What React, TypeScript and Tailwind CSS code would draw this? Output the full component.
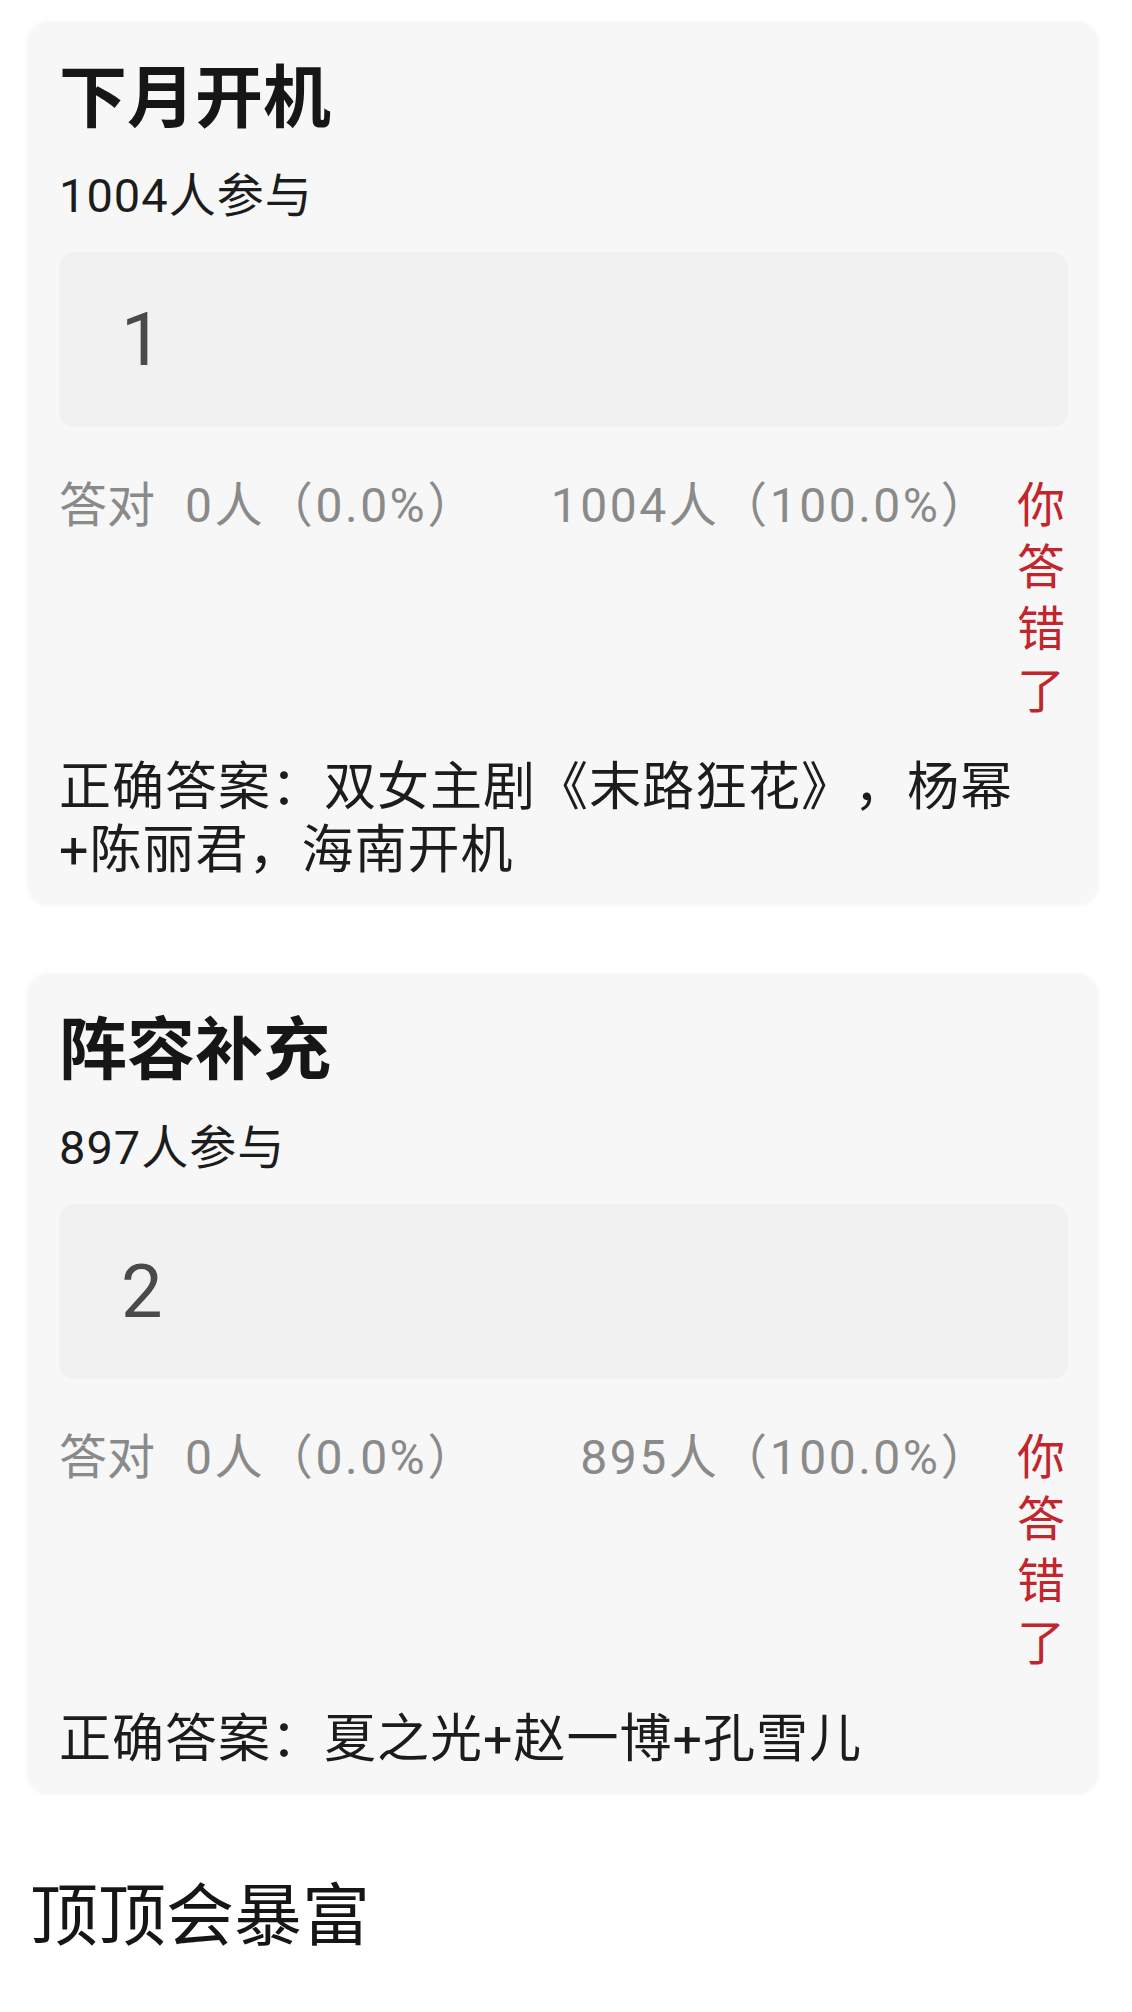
type Question = {
  title: string;
  joined: number;
  answer: string;
  rightText: string;
  wrongText: string;
  correct: string;
};

const questions: Question[] = [
  {
    title: "下月开机",
    joined: 1004,
    answer: "1",
    rightText: "0人（0.0%）",
    wrongText: "1004人（100.0%）",
    correct: "正确答案：双女主剧《末路狂花》，杨幂+陈丽君，海南开机",
  },
  {
    title: "阵容补充",
    joined: 897,
    answer: "2",
    rightText: "0人（0.0%）",
    wrongText: "895人（100.0%）",
    correct: "正确答案：夏之光+赵一博+孔雪儿",
  },
];

const QuizCard = ({ q }: { q: Question }) => {
  return (
    <div className="rounded-[20px] bg-[#f7f7f7] pl-[31px] pr-[30px] pt-[43px] pb-[23px] shadow-[0_0_6px_rgba(0,0,0,0.04)]">
      <div className="text-[68px] leading-[68px] font-bold text-[#161616]">
        {q.title}
      </div>
      <div className="mt-[40px] text-[47px] leading-[46px] tracking-[1px] text-[#1c1c1c]">
        {q.joined}人参与
      </div>
      <div className="mt-[33px] flex h-[175px] items-center rounded-[16px] bg-[#f1f1f1] pl-[62px] text-[74px] leading-none text-[#4a4a4a]">
        {q.answer}
      </div>
      <div className="mt-[48px] flex items-start">
        <div className="mr-[26px] flex flex-1 justify-between text-[48px] leading-[62px] text-[#8a8a8a]">
          <span>
            <span className="mr-[30px]">答对</span>
            <span className="tracking-[2.5px]">{q.rightText}</span>
          </span>
          <span className="tracking-[2.5px]">{q.wrongText}</span>
        </div>
        <div className="w-[51px] text-[48px] leading-[62px] text-[#c0262c]">
          你答错了
        </div>
      </div>
      <div className="mt-[33px] text-[52px] leading-[63px] tracking-[1px] text-[#1c1c1c]">
        {q.correct}
      </div>
    </div>
  );
};

const App = () => {
  return (
    <div className="min-h-[2012px] w-full bg-white pl-[28px] pr-[34px] pt-[22px] font-['Roboto','Noto_Sans_CJK_SC',sans-serif] [text-spacing-trim:space-all]">
      <div className="flex flex-col gap-[69px]">
        {questions.map((q) => (
          <QuizCard key={q.title} q={q} />
        ))}
      </div>
      <div className="mt-[89px] ml-[2px] text-[68px] leading-[68px] text-[#161616]">
        顶顶会暴富
      </div>
    </div>
  );
};

export default App;
